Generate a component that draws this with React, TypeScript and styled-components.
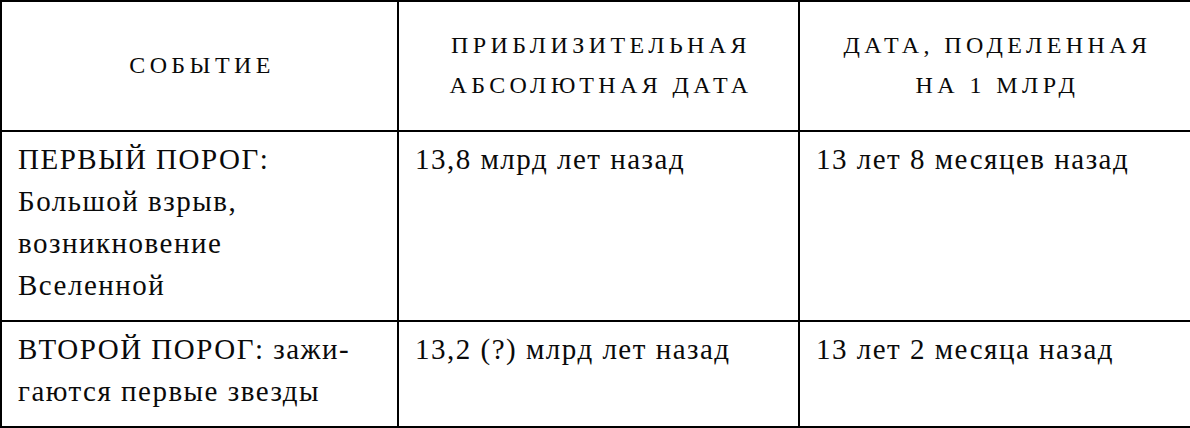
import * as React from 'react';
import styled, { createGlobalStyle } from 'styled-components';

const serif = `"Liberation Serif", "Times New Roman", "DejaVu Serif", serif`;

const Global = createGlobalStyle`
  html, body {
    margin: 0;
    padding: 0;
    background: #fff;
    font-family: ${serif};
  }
`;

interface Row {
  event: React.ReactNode;
  absolute: string;
  scaled: string;
}

const rows: Row[] = [
  {
    event: (
      <>
        ПЕРВЫЙ ПОРОГ:
        <br />
        Большой взрыв,
        <br />
        возникновение
        <br />
        Вселенной
      </>
    ),
    absolute: '13,8 млрд лет назад',
    scaled: '13 лет 8 месяцев назад',
  },
  {
    event: (
      <>
        ВТОРОЙ ПОРОГ: зажи-
        <br />
        гаются первые звезды
      </>
    ),
    absolute: '13,2 (?) млрд лет назад',
    scaled: '13 лет 2 месяца назад',
  },
];

export default function App() {
  return (
    <>
      <Global />
      <S.Table>
        <colgroup>
          <col style={{ width: 397 }} />
          <col style={{ width: 401 }} />
          <col style={{ width: 392 }} />
        </colgroup>
        <thead>
          <S.HeadRow>
            <S.Th>СОБЫТИЕ</S.Th>
            <S.Th>
              ПРИБЛИЗИТЕЛЬНАЯ
              <br />
              АБСОЛЮТНАЯ ДАТА
            </S.Th>
            <S.Th>
              ДАТА, ПОДЕЛЕННАЯ
              <br />
              НА 1 МЛРД
            </S.Th>
          </S.HeadRow>
        </thead>
        <tbody>
          {rows.map((row, i) => (
            <S.BodyRow key={i} $height={i === 0 ? 190 : 106}>
              <S.Td>{row.event}</S.Td>
              <S.Td>{row.absolute}</S.Td>
              <S.Td>{row.scaled}</S.Td>
            </S.BodyRow>
          ))}
        </tbody>
      </S.Table>
    </>
  );
}

const S = {
  Table: styled.table`
    width: 1190px;
    table-layout: fixed;
    border-collapse: collapse;
    border: 2px solid #1a1a1a;
    color: #0a0a0a;
  `,
  HeadRow: styled.tr`
    height: 130px;
  `,
  BodyRow: styled.tr<{ $height: number }>`
    height: ${(p) => p.$height}px;
  `,
  Th: styled.th`
    border: 2px solid #000;
    padding: 0 6px 2px 11px;
    font-family: ${serif};
    font-weight: normal;
    font-size: 24px;
    letter-spacing: 4.4px;
    line-height: 40px;
    text-align: center;
    vertical-align: middle;
  `,
  Td: styled.td`
    border: 2px solid #000;
    padding: 6px 10px 12px 16px;
    font-family: ${serif};
    font-size: 29px;
    letter-spacing: 1.5px;
    line-height: 42px;
    vertical-align: top;
    text-align: left;
  `,
};
